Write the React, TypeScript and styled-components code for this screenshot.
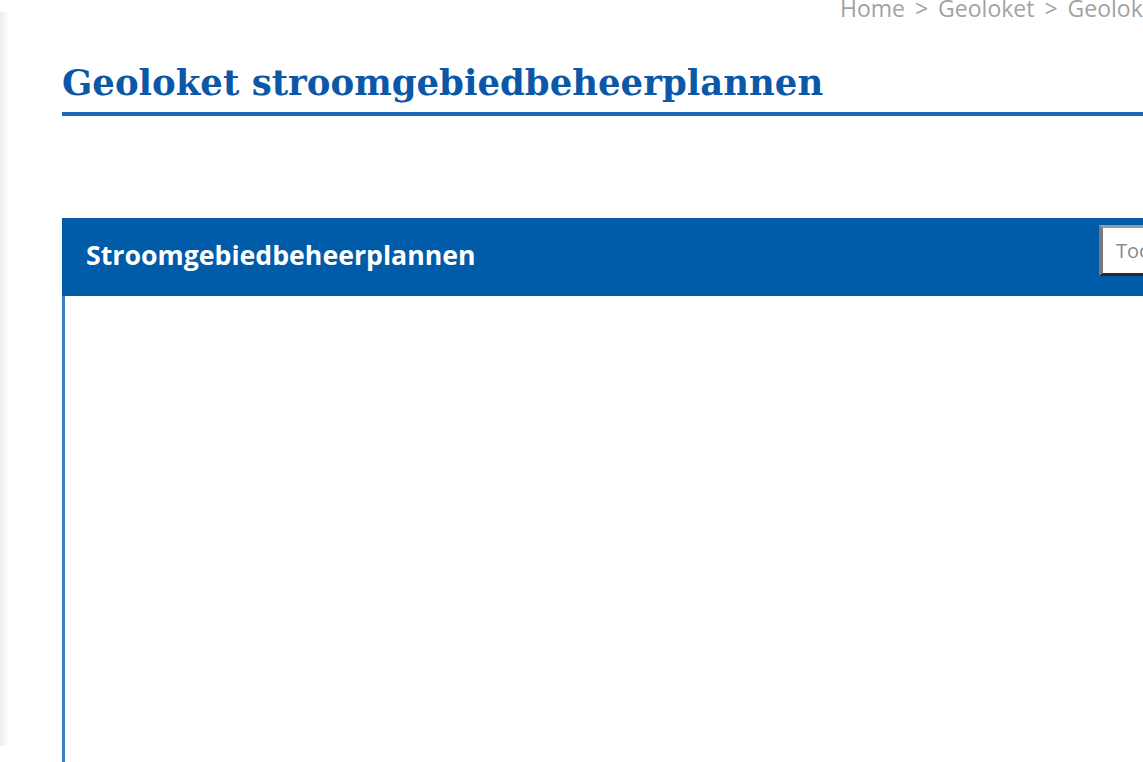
import React from "react";
import styled, { createGlobalStyle } from "styled-components";

const Global = createGlobalStyle`
  html, body { margin: 0; padding: 0; background: #fff; overflow: hidden; }
  body { width: 1143px; height: 762px; }
`;

const Page = styled.div`
  display: flex;
  width: 1143px;
  height: 762px;
  overflow: hidden;
`;

const SideShadow = styled.div`
  flex: 0 0 9px;
  margin-top: 12px;
  height: 734px;
  background: linear-gradient(to right, #ececec, #f6f6f6 50%, #ffffff);
`;

const Main = styled.div`
  flex: 0 0 auto;
  width: 1200px;
  margin-left: 53px;
  display: flex;
  flex-direction: column;
`;

const Breadcrumb = styled.nav`
  align-self: flex-start;
  margin-left: 778px;
  margin-top: -7px;
  height: 30px;
  font-family: "Open Sans", sans-serif;
  font-size: 23px;
  line-height: 30px;
  color: #a3a3a3;
  white-space: nowrap;
  word-spacing: 4px;
`;

const Title = styled.h1`
  margin: 38px 0 0 0;
  padding: 0 0 7px 0;
  border-bottom: 4px solid #1f68b7;
  font-family: "DejaVu Serif", serif;
  font-weight: bold;
  font-size: 35.5px;
  line-height: 44px;
  color: #0b58a8;
  white-space: nowrap;
`;

const Panel = styled.section`
  margin-top: 102px;
  display: flex;
  flex-direction: column;
  flex: 1 1 auto;
  border-left: 3px solid #3a80c8;
`;

const PanelHeader = styled.div`
  height: 78px;
  box-sizing: border-box;
  margin-left: -3px;
  background: #005ca9;
  display: flex;
  align-items: center;
  padding: 0 0 6px 24px;
  position: relative;
`;

const PanelTitle = styled.h2`
  margin: 0;
  font-family: "Open Sans", sans-serif;
  font-weight: bold;
  font-size: 26.7px;
  color: #fff;
  white-space: nowrap;
`;

const ToolButton = styled.button`
  position: absolute;
  left: 1037px;
  top: 7px;
  width: 120px;
  height: 51px;
  background: #fff;
  border-style: solid;
  border-width: 3px 2px 3px 4px;
  border-color: #9a9a9a #2a2a2a #2a2a2a #7a7a7a;
  font-family: "Open Sans", sans-serif;
  font-size: 20px;
  color: #8a8a8a;
  text-align: left;
  padding-left: 13px;
`;

const PanelBody = styled.div`
  flex: 1 1 auto;
  background: #fff;
`;

export default function App() {
  return (
    <>
      <Global />
      <Page>
        <SideShadow />
        <Main>
          <Breadcrumb>Home &gt; Geoloket &gt; Geoloket stroomgebiedbeheerplannen</Breadcrumb>
          <Title>Geoloket stroomgebiedbeheerplannen</Title>
          <Panel>
            <PanelHeader>
              <PanelTitle>Stroomgebiedbeheerplannen</PanelTitle>
              <ToolButton>Toon</ToolButton>
            </PanelHeader>
            <PanelBody />
          </Panel>
        </Main>
      </Page>
    </>
  );
}
